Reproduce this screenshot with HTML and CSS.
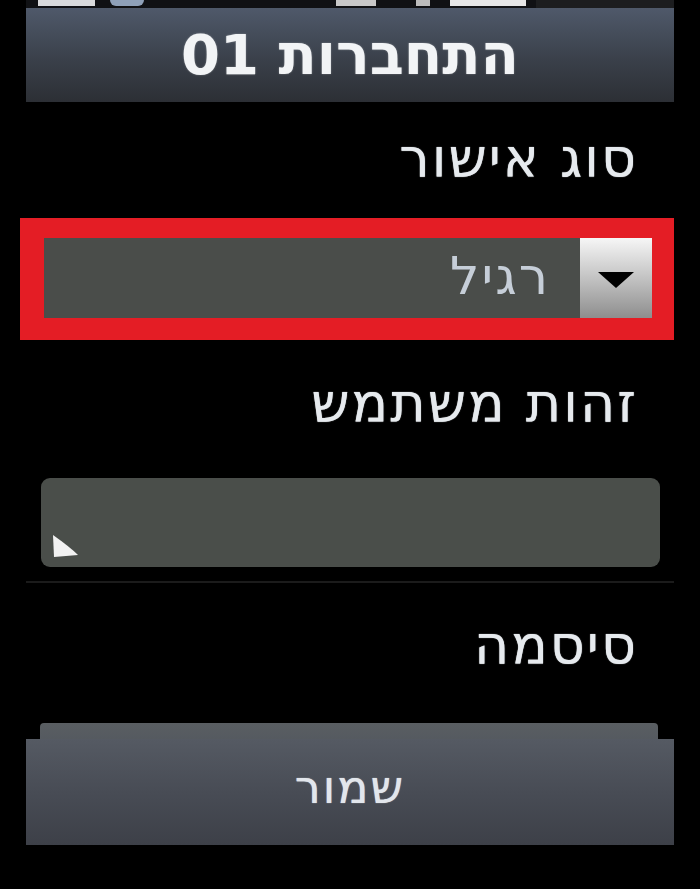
FILE: index.html
```html
<!DOCTYPE html>
<html lang="he" dir="rtl">
<head>
<meta charset="utf-8">
<title>התחברות 01</title>
<link rel="stylesheet" href="styles.css">
</head>
<body>
<div class="screen">
  <div class="status">
    <span class="st st-signal"></span>
    <span class="st st-dot"></span>
    <span class="st-gap"></span>
    <span class="st st-a"></span>
    <span class="st st-b"></span>
    <span class="st st-c"></span>
    <span class="st st-d"></span>
  </div>
  <div class="titlebar"><h1 class="title">התחברות 01</h1></div>

  <div class="label label-1">סוג אישור</div>
  <div class="select-frame">
    <div class="select">
      <div class="select-btn">
        <svg class="caret" width="38" height="18" viewBox="0 0 38 18"><polygon points="1,1 37,1 19,17" fill="#000"/></svg>
      </div>
      <span class="select-value">רגיל</span>
    </div>
  </div>

  <div class="label label-2">זהות משתמש</div>
  <div class="input">
    <svg class="grip" width="30" height="26" viewBox="0 0 30 26"><path d="M3 2 L4 24 L28 22 Q20 14 3 2 Z" fill="#f2f2f2"/></svg>
  </div>
  <div class="divider"></div>

  <div class="label label-3">סיסמה</div>
  <div class="save">
    <div class="save-top"></div>
    <div class="save-body">שמור</div>
  </div>
</div>
</body>
</html>
```

FILE: styles.css
```css
html, body {
  margin: 0;
  padding: 0;
  background: #000;
}
body {
  width: 700px;
  height: 889px;
  overflow: hidden;
  font-family: "DejaVu Sans", "Liberation Sans", sans-serif;
  color: #e9edf1;
}
.screen {
  display: flex;
  flex-direction: column;
  padding: 0 26px 0 26px;
}
.status {
  direction: ltr;
  display: flex;
  align-items: flex-start;
  height: 8px;
  background: #101114;
}
.st { display: block; height: 6px; }
.st-signal { width: 57px; margin-left: 12px; background: #d9dadc; }
.st-dot { width: 34px; margin-left: 15px; background: #8ea0b8; border-radius: 0 0 17px 17px; }
.st-gap { flex: 1; }
.st-a { width: 40px; background: #c8c8c8; }
.st-b { width: 14px; margin-left: 40px; background: #bcbcbc; }
.st-c { width: 76px; margin-left: 20px; background: #e6e6e6; }
.st-d { width: 138px; margin-left: 10px; background: #1c1d1f; height: 8px; }
.titlebar {
  height: 94px;
  background: linear-gradient(#4f596a, #3a404a 55%, #2c2f35);
  display: flex;
  align-items: center;
  justify-content: center;
}
.title {
  margin: 0 0 2px 0;
  font-size: 56px;
  font-weight: bold;
  color: #f2f4f6;
  text-shadow: 0 0 2px rgba(255,255,255,0.35);
}
.label {
  font-size: 54px;
  letter-spacing: 2px;
  padding-right: 36px;
  display: flex;
  align-items: center;
  justify-content: flex-start;
  color: #e6eaee;
  text-shadow: 0 0 1px #e6eaee;
  box-sizing: border-box;
}
.label-1 { height: 116px; padding-bottom: 4px; }
.label-2 { height: 138px; padding-bottom: 12px; }
.label-3 { height: 140px; padding-bottom: 15px; }
.select-frame {
  margin: 0 0 0 -6px;
  background: #e41d25;
  padding: 20px 22px 22px 24px;
}
.select {
  height: 80px;
  background: #4a4d4a;
  display: flex;
  align-items: center;
}
.select-btn {
  width: 72px;
  height: 80px;
  background: linear-gradient(#f6f6f6, #c8c8c8 45%, #8e8e8e);
  display: flex;
  align-items: center;
  justify-content: center;
}
.caret { margin-top: 4px; }
.select-value {
  font-size: 52px;
  letter-spacing: 2px;
  color: #c6ced8;
  margin-right: 30px;
  margin-bottom: 4px;
}
.input {
  height: 89px;
  margin: 0 14px 0 15px;
  background: #4a4e4a;
  border-radius: 9px;
  display: flex;
  align-items: flex-end;
  justify-content: flex-end;
}
.grip { margin: 0 0 8px 9px; }
.divider {
  height: 2px;
  background: #1b1b1b;
  margin: 14px 0 0 0;
}
.save {
  display: flex;
  flex-direction: column;
}
.save-top {
  height: 16px;
  margin: 0 16px 0 14px;
  background: linear-gradient(#5a5e62, #555a60);
  border-radius: 4px 4px 0 0;
}
.save-body {
  height: 106px;
  background: linear-gradient(#555a63, #484c55 50%, #3d4048);
  display: flex;
  align-items: center;
  justify-content: center;
  font-size: 46px;
  letter-spacing: 2px;
  color: #e2e6ec;
  text-shadow: 0 0 1px #e2e6ec;
  padding-bottom: 10px;
  box-sizing: border-box;
}
```
